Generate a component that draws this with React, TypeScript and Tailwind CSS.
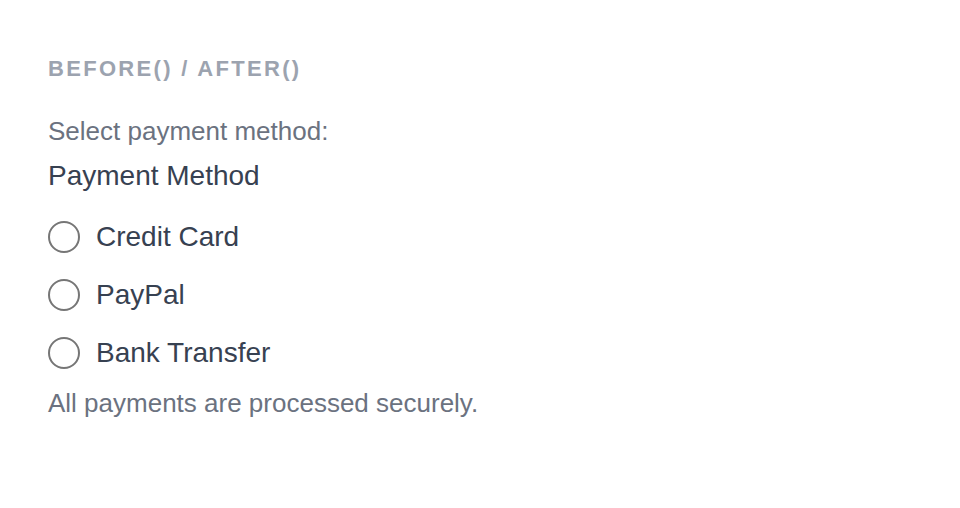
import React from 'react';

const methods = ['Credit Card', 'PayPal', 'Bank Transfer'];

function RadioRow({ label }: { label: string }) {
  return (
    <label className="flex h-[58px] items-center gap-4">
      <span className="h-8 w-8 shrink-0 rounded-full border-2 border-[#767676] bg-white" />
      <span className="text-[28px] leading-[40px] text-[#374151]">{label}</span>
    </label>
  );
}

export default function App() {
  return (
    <div
      className="min-h-[508px] w-full bg-white px-12 pt-[49px]"
      style={{ fontFamily: '"Liberation Sans", Arial, sans-serif' }}
    >
      <div className="text-[22px] font-bold uppercase leading-[40px] tracking-[0.105em] text-[#9ca3af]">
        before() / after()
      </div>
      <div className="mt-[22px] text-[26px] leading-[40px] text-[#6b7280]">Select payment method:</div>
      <div className="mt-[5px] text-[28px] leading-[40px] text-[#374151]">Payment Method</div>
      <div className="mt-3 flex flex-col">
        {methods.map((m) => (
          <RadioRow key={m} label={m} />
        ))}
      </div>
      <div className="mt-px text-[26px] leading-[40px] text-[#6b7280]">All payments are processed securely.</div>
    </div>
  );
}
